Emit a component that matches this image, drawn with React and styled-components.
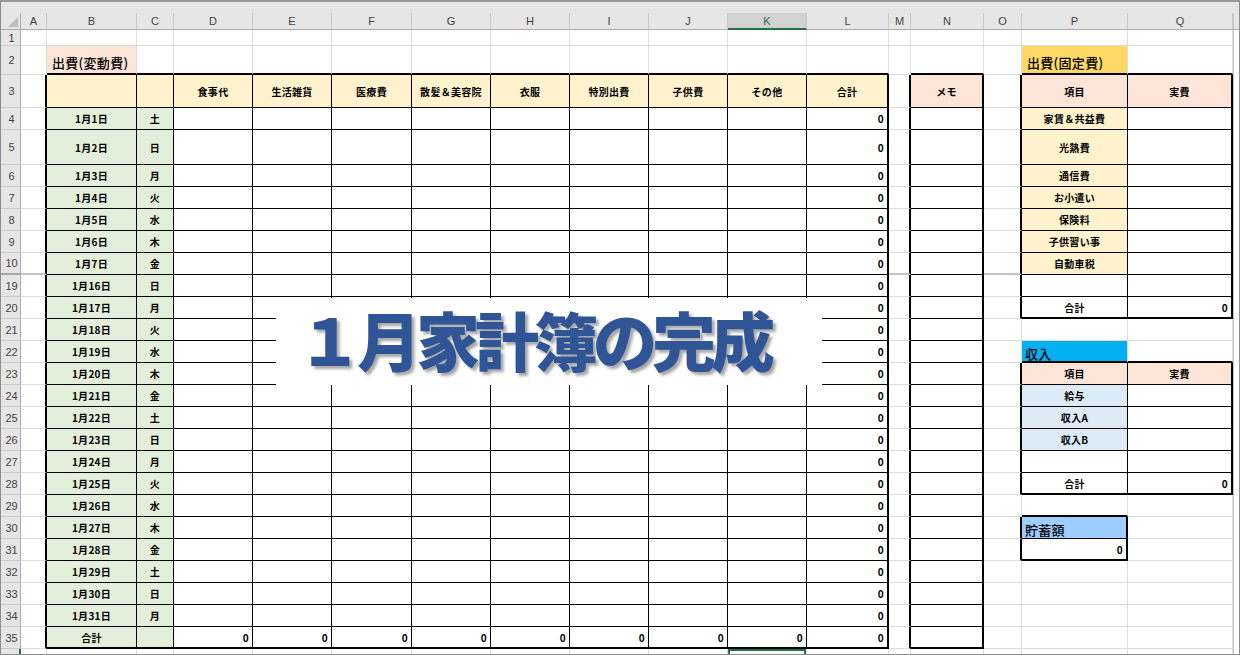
import React from 'react';
import styled, { createGlobalStyle } from 'styled-components';

const GlobalStyle = createGlobalStyle`
  html, body {
    margin: 0;
    padding: 0;
    background: #fff;
  }
  body {
    font-family: "Noto Sans CJK JP", "Noto Sans", sans-serif;
  }
`;

const colNames = 'ABCDEFGHIJKLMNOPQ'.split('');
const colWidths = [26, 90, 37, 79, 79, 80, 79, 79, 79, 79, 79, 82, 22, 73, 38, 106, 105];
const activeCol = 'K';

const rowNums = [1, 2, 3, 4, 5, 6, 7, 8, 9, 10, 19, 20, 21, 22, 23, 24, 25, 26, 27, 28, 29, 30, 31, 32, 33, 34, 35, 36];
const rowHeight = { 1: 16, 2: 29, 3: 33, 5: 35 };
const rowIdx = (n) => rowNums.indexOf(n);
const col = (letter) => colNames.indexOf(letter);

const C = {
  peach: '#FCE4D6',
  yellow: '#FFF2CC',
  green: '#E2EFDA',
  gold: '#FFD966',
  cyan: '#00B0F0',
  pale: '#DDEBF7',
  sky: '#9DCDFF',
  grid: '#DCDCDC',
  excel: '#217346',
};

// bordered ranges: [firstCol, firstRow, lastCol, lastRow]
const boxes = [
  ['B', 3, 'L', 35],
  ['N', 3, 'N', 35],
  ['P', 3, 'Q', 20],
  ['P', 23, 'Q', 28],
  ['P', 30, 'P', 31],
].map(([c1, r1, c2, r2]) => ({ c1: col(c1), r1: rowIdx(r1), c2: col(c2), r2: rowIdx(r2) }));

const rightEdge = (c, r) => {
  let w = 0;
  boxes.forEach((b) => {
    if (r < b.r1 || r > b.r2) return;
    if (c === b.c2 || c + 1 === b.c1) w = Math.max(w, 2);
    else if (c >= b.c1 && c < b.c2) w = Math.max(w, 1);
  });
  return w;
};

const bottomEdge = (c, r) => {
  let w = 0;
  boxes.forEach((b) => {
    if (c < b.c1 || c > b.c2) return;
    if (r === b.r2 || r + 1 === b.r1) w = Math.max(w, 2);
    else if (r >= b.r1 && r < b.r2) w = Math.max(w, 1);
  });
  return w;
};

const days = [
  [4, 1, '土'], [5, 2, '日'], [6, 3, '月'], [7, 4, '火'], [8, 5, '水'], [9, 6, '木'], [10, 7, '金'],
  [19, 16, '日'], [20, 17, '月'], [21, 18, '火'], [22, 19, '水'], [23, 20, '木'], [24, 21, '金'],
  [25, 22, '土'], [26, 23, '日'], [27, 24, '月'], [28, 25, '火'], [29, 26, '水'], [30, 27, '木'],
  [31, 28, '金'], [32, 29, '土'], [33, 30, '日'], [34, 31, '月'],
];

const headers = ['食事代', '生活雑貨', '医療費', '散髪＆美容院', '衣服', '特別出費', '子供費', 'その他', '合計'];
const fixedCosts = ['家賃＆共益費', '光熱費', '通信費', 'お小遣い', '保険料', '子供習い事', '自動車税'];

const cells = {};
const put = (ref, text, fill, kind = 'label') => { cells[ref] = { text, fill, kind }; };

put('B2', '出費(変動費)', C.peach, 'title');
put('P2', '出費(固定費)', C.gold, 'title');
put('B3', '', C.yellow);
put('C3', '', C.yellow);
headers.forEach((h, i) => put(`${colNames[3 + i]}3`, h, C.yellow));
put('N3', 'メモ', C.peach);
put('P3', '項目', C.peach);
put('Q3', '実費', C.peach);

days.forEach(([r, d, w]) => {
  put(`B${r}`, `1月${d}日`, C.green);
  put(`C${r}`, w, C.green);
  put(`L${r}`, '0', null, 'num');
});
put('B35', '合計', C.green);
put('C35', '', C.green);
'DEFGHIJKL'.split('').forEach((l) => put(`${l}35`, '0', null, 'num'));

fixedCosts.forEach((t, i) => put(`P${4 + i}`, t, C.yellow));
put('P20', '合計');
put('Q20', '0', null, 'num');

put('P22', '収入', C.cyan, 'section');
put('P23', '項目', C.peach);
put('Q23', '実費', C.peach);
put('P24', '給与', C.pale);
put('P25', '収入A', C.pale);
put('P26', '収入B', C.pale);
put('P28', '合計');
put('Q28', '0', null, 'num');

put('P30', '貯蓄額', C.sky, 'section');
put('P31', '0', null, 'num');

const kinds = {
  label: { size: 10, weight: 700, justify: 'center', pad: '0' },
  num: { size: 10, weight: 700, justify: 'flex-end', pad: '0 3px 0 0' },
  title: { size: 13, weight: 500, justify: 'flex-start', pad: '5px 0 0 5px' },
  section: { size: 13, weight: 500, justify: 'flex-start', pad: '4px 0 0 3px' },
};

const Frame = styled.div`
  position: relative;
  width: 1240px;
  height: 655px;
  box-sizing: border-box;
  border: 1px solid #8e8e8e;
  border-top: 2px solid #9a9a9a;
  overflow: hidden;
  background: #fff;
`;

const RibbonEdge = styled.div`
  height: 11px;
  background: #e6e6e6;
`;

const Sheet = styled.div`
  display: grid;
  grid-template-columns: 20px ${colWidths.map((w) => `${w}px`).join(' ')} 1fr;
  grid-template-rows: 17px ${rowNums.map((n) => `${rowHeight[n] || 22}px`).join(' ')};
`;

const Corner = styled.div`
  background: #e6e6e6;
  border-right: 1px solid #ababab;
  border-bottom: 1px solid #ababab;
  box-sizing: border-box;
  display: flex;
  align-items: flex-end;
  justify-content: flex-end;
  padding: 0 2px 2px 0;
`;

const ColHead = styled.div`
  box-sizing: border-box;
  background: ${(p) => (p.$active ? '#d2d2d2' : '#e6e6e6')};
  color: ${(p) => (p.$active ? C.excel : '#444')};
  border-right: 1px solid #c9c9c9;
  border-bottom: ${(p) => (p.$active ? `2px solid ${C.excel}` : '1px solid #ababab')};
  font-family: "Liberation Sans", Arial, sans-serif;
  font-size: 11px;
  display: flex;
  align-items: center;
  justify-content: center;
`;

const RowHead = styled.div`
  box-sizing: border-box;
  background: #e6e6e6;
  color: #444;
  border-right: ${(p) => (p.$active ? `2px solid ${C.excel}` : '1px solid #ababab')};
  border-bottom: ${(p) => (p.$gap ? '2px solid #a6a6a6' : '1px solid #cacaca')};
  font-family: "Liberation Sans", Arial, sans-serif;
  font-size: 11px;
  display: flex;
  align-items: center;
  justify-content: center;
  padding-left: 2px;
`;

const Cell = styled.div`
  box-sizing: border-box;
  background: ${(p) => p.$fill || '#fff'};
  border-right: ${(p) => (p.$right ? `${p.$right}px solid #000` : `1px solid ${C.grid}`)};
  border-bottom: ${(p) => (p.$bottom ? `${p.$bottom}px solid #000` : p.$gap ? '2px solid #c4c4c4' : `1px solid ${C.grid}`)};
  box-shadow: ${(p) => (p.$selected ? `inset 0 0 0 2px ${C.excel}` : 'none')};
  display: flex;
  align-items: center;
  justify-content: ${(p) => p.$justify};
  padding: ${(p) => p.$pad};
  font-size: ${(p) => p.$size}px;
  font-weight: ${(p) => p.$weight};
  color: #000;
  white-space: nowrap;
  overflow: hidden;
  letter-spacing: 0.3px;
`;

const Filler = styled.div`
  background: ${(p) => (p.$head ? '#e6e6e6' : '#fff')};
  border-left: 1px solid #c4c4c4;
  border-bottom: ${(p) => (p.$head ? '1px solid #ababab' : 'none')};
`;

const Banner = styled.div`
  position: absolute;
  left: 275px;
  top: 296px;
  width: 546px;
  height: 87px;
  background: #fff;
  display: flex;
  align-items: center;
  padding: 0 0 8px 22px;
  box-sizing: border-box;
  color: #2f5597;
  font-family: "Noto Sans CJK JP", sans-serif;
  font-size: 64px;
  font-weight: 900;
  letter-spacing: -5px;
  white-space: nowrap;
  text-shadow: 3px 3px 3px rgba(0, 0, 0, 0.35);
`;

const SelectAll = () => (
  <svg width="10" height="10" viewBox="0 0 10 10">
    <polygon points="10,0 10,10 0,10" fill="#bdbdbd" />
  </svg>
);

export default function App() {
  return (
    <>
      <GlobalStyle />
      <Frame>
        <RibbonEdge />
        <Sheet>
          <Corner><SelectAll /></Corner>
          {colNames.map((c) => (
            <ColHead key={c} $active={c === activeCol}>{c}</ColHead>
          ))}
          <Filler $head />
          {rowNums.map((n, ri) => (
            <React.Fragment key={n}>
              <RowHead $gap={n === 10} $active={n === 36}>{n === 36 ? '' : n}</RowHead>
              {colNames.map((c, ci) => {
                const info = cells[`${c}${n}`] || { text: '', fill: null, kind: 'label' };
                const k = kinds[info.kind];
                return (
                  <Cell
                    key={c}
                    $fill={info.fill}
                    $right={rightEdge(ci, ri)}
                    $bottom={bottomEdge(ci, ri)}
                    $gap={n === 10}
                    $selected={n === 36 && c === activeCol}
                    $justify={k.justify}
                    $pad={k.pad}
                    $size={k.size}
                    $weight={k.weight}
                  >
                    {info.text}
                  </Cell>
                );
              })}
              <Filler />
            </React.Fragment>
          ))}
        </Sheet>
        <Banner>１月家計簿の完成</Banner>
      </Frame>
    </>
  );
}
